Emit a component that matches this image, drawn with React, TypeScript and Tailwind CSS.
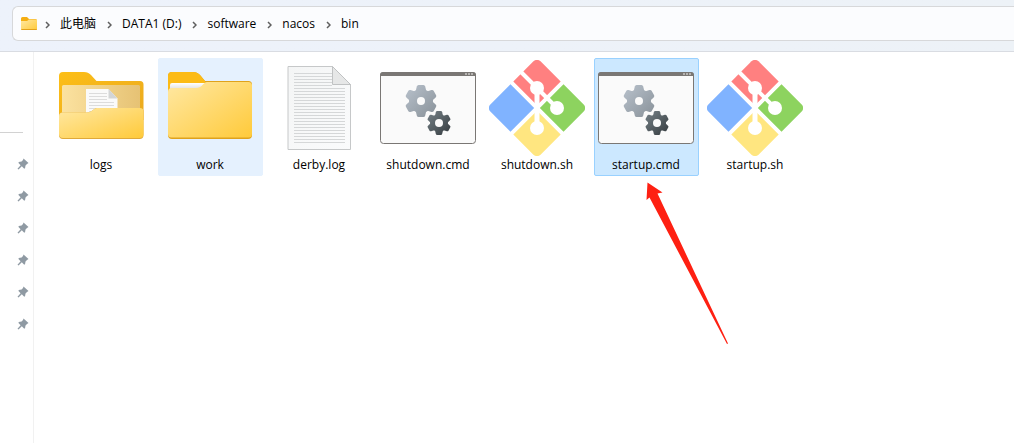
import { useState } from "react";

const crumbs = ["此电脑", "DATA1 (D:)", "software", "nacos", "bin"];

const files = [
  { name: "logs", kind: "folder-full" },
  { name: "work", kind: "folder" },
  { name: "derby.log", kind: "text" },
  { name: "shutdown.cmd", kind: "cmd" },
  { name: "shutdown.sh", kind: "sh" },
  { name: "startup.cmd", kind: "cmd" },
  { name: "startup.sh", kind: "sh" },
];

const pins = [1, 2, 3, 4, 5, 6];

// gradients shared by all of the file icons
function IconDefs() {
  return (
    <svg width="0" height="0" className="absolute" aria-hidden="true">
      <defs>
        <linearGradient id="folderFront" x1="0" y1="0" x2="1" y2="1">
          <stop offset="0" stopColor="#ffe8a3" />
          <stop offset="1" stopColor="#ffca3a" />
        </linearGradient>
        <linearGradient id="folderBack" x1="0" y1="0" x2="1" y2="1">
          <stop offset="0" stopColor="#fdbf17" />
          <stop offset="1" stopColor="#e9a820" />
        </linearGradient>
        <linearGradient id="folderInner" x1="0" y1="0" x2="1" y2="0">
          <stop offset="0" stopColor="#fbe2a0" />
          <stop offset="1" stopColor="#e6c274" />
        </linearGradient>
        <linearGradient id="folderSlip" x1="0" y1="0" x2="0" y2="1">
          <stop offset="0" stopColor="#ffffff" />
          <stop offset="1" stopColor="#d9d6d2" />
        </linearGradient>
        <linearGradient id="paper" x1="0" y1="0" x2="1" y2="1">
          <stop offset="0" stopColor="#f4f5f5" />
          <stop offset="1" stopColor="#fafbfc" />
        </linearGradient>
        <linearGradient id="gearLight" gradientUnits="userSpaceOnUse" x1="-12" y1="-12" x2="12" y2="12">
          <stop offset="0" stopColor="#b3bcc6" />
          <stop offset="1" stopColor="#8e979f" />
        </linearGradient>
        <linearGradient id="gearDark" gradientUnits="userSpaceOnUse" x1="-12" y1="-12" x2="12" y2="12">
          <stop offset="0" stopColor="#6f7a80" />
          <stop offset="1" stopColor="#3c4347" />
        </linearGradient>
      </defs>
    </svg>
  );
}

function FullFolder() {
  return (
    <>
      <path
        d="M6 16a4 4 0 0 1 4-4h21c3 0 5 1 7 3l5.500 6H87a3.500 3.500 0 0 1 3.500 3.500V60H6z"
        fill="url(#folderBack)"
      />
      <rect x="9" y="25" width="78" height="40" rx="1.500" fill="url(#folderInner)" />
      <path d="M33 29h22.500l9 9.500V60H33z" fill="#fafafa" />
      <path d="M55.500 29v9.500h9z" fill="#d3d5d6" />
      <path d="M36 33.500h18M36 36.500h18M36 39.500h18M36 42.500h25M36 45.500h25M36 48.500h25M36 51.500h25" stroke="#dcdcdc" fill="none" />
      <path
        d="M6 56a3.500 3.500 0 0 1 3.500-3.500H34c3 0 4-1 6-2.500s3-2 5-2h42a3.500 3.500 0 0 1 3.500 3.500V75a4 4 0 0 1-4 4H10a4 4 0 0 1-4-4z"
        fill="#dfa93a"
      />
      <path
        d="M6 56a3.500 3.500 0 0 1 3.500-3.500H34c3 0 4-1 6-2.500s3-2 5-2h42a3.500 3.500 0 0 1 3.500 3.500V74a4 4 0 0 1-4 4H10a4 4 0 0 1-4-4z"
        fill="url(#folderFront)"
      />
    </>
  );
}

function Folder() {
  return (
    <>
      <path
        d="M6 16a4 4 0 0 1 4-4h21c3 0 5 1 7 3l5 6H86.500a3.500 3.500 0 0 1 3.500 3.500V75a4 4 0 0 1-4 4H10a4 4 0 0 1-4-4z"
        fill="#dfa21c"
      />
      <path d="M6 16a4 4 0 0 1 4-4h21c3 0 5 1 7 3l5 6v10H6z" fill="#fcbb16" />
      <path d="M8 31v-6a2 2 0 0 1 2-2h34l-4 5z" fill="url(#folderSlip)" />
      <path
        d="M6 32a4 4 0 0 1 4-4h24c3 0 4.500-1 6-2.500s3-3.500 5-3.500h41.500a3.500 3.500 0 0 1 3.500 3.500V74a3.500 3.500 0 0 1-3.500 3.500h-77A3.500 3.500 0 0 1 6 74z"
        fill="url(#folderFront)"
      />
    </>
  );
}

function TextFile() {
  const lines = Array.from({ length: 24 }, (_, i) => 13 + i * 3);
  return (
    <>
      <path d="M17 6.500h44.500l18 18V89.500H17z" fill="url(#paper)" stroke="#c6c8c9" />
      {lines.map((y) => (
        <path key={y} d={`M23 ${y + 0.5}H${y < 27 ? 61 : 74}`} stroke="#d5d7d8" />
      ))}
      <path d="M61.500 6.500v18h18z" fill="#e6e7e7" stroke="#c0c2c3" />
    </>
  );
}

function Gear({ x, y, scale, fill, hole }: { x: number; y: number; scale: number; fill: string; hole: number }) {
  return (
    <g transform={`translate(${x} ${y})`}>
      <g transform={`scale(${scale})`} fill={`url(#${fill})`}>
        <circle r="12" />
        {/* opposite teeth are drawn as one bar, so that the gradient stays upright */}
        <path d="M-5.500 9L-4.200 14.500Q-3.800 16-2.500 16H2.500Q3.800 16 4.200 14.500L5.500 9V-9L4.200-14.500Q3.800-16 2.500-16H-2.500Q-3.800-16-4.200-14.500L-5.500-9z" />
        <path d="M5.040-9.260L10.460-10.890Q11.960-11.290 12.610-10.170L15.110-5.830Q15.760-4.710 14.660-3.610L10.540 0.260L-5.040 9.260L-10.460 10.890Q-11.960 11.290-12.610 10.170L-15.110 5.830Q-15.760 4.710-14.660 3.610L-10.540-0.260z" />
        <path d="M-5.040-9.260L-10.460-10.890Q-11.960-11.290-12.610-10.170L-15.110-5.830Q-15.760-4.710-14.660-3.610L-10.540 0.260L5.040 9.260L10.460 10.890Q11.960 11.290 12.610 10.170L15.110 5.830Q15.760 4.710 14.660 3.610L10.540-0.260z" />
      </g>
      <circle r={hole} fill="#fafafa" />
    </g>
  );
}

function CmdFile() {
  return (
    <>
      <rect x="0.500" y="12.500" width="95" height="71" rx="3" fill="#fafafa" stroke="#7a7774" />
      <path d="M0 16v-1a3 3 0 0 1 3-3h90a3 3 0 0 1 3 3v1z" fill="#7a7774" />
      <path d="M85 13h2v2h-2zM88 13h2v2h-2zM91 13h2v2h-2z" fill="#b5b3b1" />
      <Gear x={41} y={41} scale={1} fill="gearLight" hole={4} />
      <Gear x={59} y={63} scale={0.75} fill="gearDark" hole={4} />
    </>
  );
}

function ShellFile() {
  return (
    <>
      <g transform="rotate(45 48 48)">
        <path d="M46 12.500V46H12.500V17.500a5 5 0 0 1 5-5z" fill="#ff8080" />
        <path d="M50 12.500h28.500a5 5 0 0 1 5 5V46H50z" fill="#8dd35f" />
        <path d="M50 50h33.500v28.500a5 5 0 0 1-5 5H50z" fill="#ffe680" />
        <path d="M12.500 50H46v33.500H17.500a5 5 0 0 1-5-5z" fill="#80b3ff" />
      </g>
      <path d="M25 5l43 43" stroke="#fff" strokeWidth="4" fill="none" />
      <path d="M48 28v40" stroke="#fff" strokeWidth="5" fill="none" />
      <circle cx="48" cy="28" r="7" fill="#fff" />
      <circle cx="68" cy="48" r="7" fill="#fff" />
      <circle cx="48" cy="68" r="7" fill="#fff" />
    </>
  );
}

function FileIcon({ kind }: { kind: string }) {
  return (
    <svg viewBox="0 0 96 96" className="w-24 h-24 shrink-0" aria-hidden="true">
      {kind === "folder-full" && <FullFolder />}
      {kind === "folder" && <Folder />}
      {kind === "text" && <TextFile />}
      {kind === "cmd" && <CmdFile />}
      {kind === "sh" && <ShellFile />}
    </svg>
  );
}

function Chevron() {
  return (
    <svg viewBox="0 0 5 10" className="w-[5px] h-2.5 shrink-0" aria-hidden="true">
      <path d="M1 3l3 3-3 3" fill="none" stroke="#5f5f5f" strokeWidth="1.500" />
    </svg>
  );
}

export default function App() {
  const [selected, setSelected] = useState("startup.cmd");

  return (
    <div className="min-h-screen flex flex-col overflow-hidden bg-white text-black font-['Open_Sans','Noto_Sans_CJK_SC',sans-serif]">
      <IconDefs />

      <header className="bg-linear-to-r from-[#edf2fb] to-[#edf2f7] border-b border-[#d9dce2] pt-1.5 pb-2.5 pl-3">
        <nav
          aria-label="Path"
          className="h-[35px] flex items-center gap-2 pl-2 bg-[#fbfcfe] border border-r-0 border-[#d7d8da] rounded-l-md text-xs"
        >
          <svg viewBox="0 0 16 14" className="w-4 h-3.5 shrink-0" aria-hidden="true">
            <path d="M0 1.500A1.500 1.500 0 0 1 1.500 0H6l2 2h6.500A1.500 1.500 0 0 1 16 3.500V13H0z" fill="#f5ae12" />
            <path d="M0 4h6l2-1.500h8V12a1 1 0 0 1-1 1H1a1 1 0 0 1-1-1z" fill="url(#folderFront)" />
            <path d="M0.500 12.500h15" stroke="#e3a11c" />
          </svg>
          <ol className="flex items-center gap-[11px]">
            {crumbs.map((crumb) => (
              <li key={crumb} className="flex items-center gap-2.5">
                <Chevron />
                <button className="leading-4 whitespace-nowrap">{crumb}</button>
              </li>
            ))}
          </ol>
        </nav>
      </header>

      <div className="flex-1 flex">
        <aside className="w-[34px] shrink-0 border-r border-[#f1f1f1]">
          <div className="mt-20 w-[23px] border-t border-[#d2d2d2]" />
          <ul className="mt-[25px] flex flex-col gap-5 items-end pr-1">
            {pins.map((pin) => (
              <li key={pin} className="h-3">
                <button aria-label="Unpin" className="block">
                  <svg viewBox="0 0 12 12" className="w-3 h-3" aria-hidden="true">
                    <path
                      d="M6.500 0.500L11.500 5 10 6 8.500 7.500 8 10.500 7 10.500 4.800 8.300 1.500 11.500 0.500 10.700 3.600 7.200 1.500 5 1.700 4 4.600 3.500 6 2z"
                      fill="#8f9aa3"
                    />
                  </svg>
                </button>
              </li>
            ))}
          </ul>
        </aside>

        <main className="relative flex-1 min-w-0 pt-1.5 pl-[15px]">
          <div className="flex flex-wrap gap-1">
            {files.map((file) => (
              <button
                key={file.name}
                onClick={() => setSelected(file.name)}
                className={`w-[105px] h-[118px] shrink-0 border rounded-xs pt-px pl-[3px] pr-1 flex flex-col items-center ${
                  file.name === selected
                    ? "bg-[#cce8ff] border-[#99d1ff]"
                    : file.name === "work"
                      ? "bg-[#e5f1fe] border-[#e5f1fe]"
                      : "border-transparent"
                }`}
              >
                <FileIcon kind={file.kind} />
                <span className="text-xs leading-[18px] whitespace-nowrap">{file.name}</span>
              </button>
            ))}
          </div>

          {/* arrow pointing at the script to run */}
          <svg
            viewBox="0 0 82 162"
            className="absolute left-[612px] top-[130px] w-[82px] h-[162px] pointer-events-none"
            aria-hidden="true"
          >
            <path d="M1.500 0.500L16.500 10.500 11.500 11.500 82 161.500 81 162 3.500 15.500 0.500 18z" fill="#fe2012" />
          </svg>
        </main>
      </div>
    </div>
  );
}
